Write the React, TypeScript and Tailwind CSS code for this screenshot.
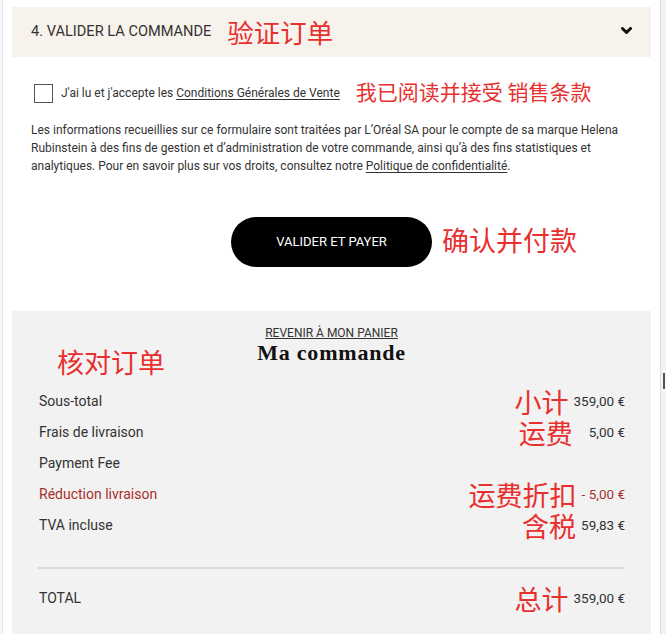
import React from "react";

const cn = "[font-family:'Noto_Sans_CJK_SC',sans-serif]";

function Note({ children, size = "text-[27px]", className = "" }: { children: React.ReactNode; size?: string; className?: string }) {
  return (
    <span className={`${cn} ${size} leading-none text-[#e8302f] whitespace-nowrap ${className}`}>
      {children}
    </span>
  );
}

function Row({
  label,
  value,
  note,
  gap = "gap-[5px]",
  red = false,
}: {
  label: string;
  value?: string;
  note?: string;
  gap?: string;
  red?: boolean;
}) {
  return (
    <div className={`flex h-[31px] items-center justify-between text-[14px] ${red ? "text-[#a7302e]" : "text-[#333]"}`}>
      <span>{label}</span>
      <div className={`flex items-center ${gap}`}>
        {note && <Note>{note}</Note>}
        {value && <span className="text-[13.5px]">{value}</span>}
      </div>
    </div>
  );
}

export default function App() {
  return (
    <div className="flex h-[634px] w-[666px] overflow-hidden bg-white [font-family:Roboto,'Liberation_Sans',sans-serif]">
      <div className="w-[3px] shrink-0 border-r border-[#e6e6e6] bg-[#f6f6f8]" />
      <div className="flex min-w-0 flex-1 flex-col px-[9px] pt-[7px]">
        {/* Header */}
        <div className="flex h-[50px] shrink-0 items-center justify-between bg-[#f7f2ec] pl-[19px] pr-[19px]">
          <div className="flex items-center gap-[16px]">
            <span className="text-[14.6px] text-[#333]">4. VALIDER LA COMMANDE</span>
            <Note size="text-[26.5px]">验证订单</Note>
          </div>
          <svg width="11" height="8" viewBox="0 0 11 8" className="mb-[3px]">
            <path d="M1.5 1.5 L5.5 5.5 L9.5 1.5" fill="none" stroke="#111" strokeWidth="3" strokeLinejoin="round" strokeLinecap="round" />
          </svg>
        </div>

        {/* Terms */}
        <div className="px-[19px]">
          <div className="mt-[24px] flex items-center whitespace-nowrap">
            <span className="ml-[3px] h-[19px] w-[19px] shrink-0 border border-[#555] bg-white" />
            <span className="ml-[8px] text-[12px] text-[#333]">
              J'ai lu et j'accepte les <span className="underline underline-offset-2">Conditions Générales de Vente</span>
            </span>
            <Note size="text-[21px]" className="mb-[3px] ml-[16px]">我已阅读并接受 销售条款</Note>
          </div>
          <p className="mt-[16px] text-[12px] leading-[18px] text-[#333]">
            Les informations recueillies sur ce formulaire sont traitées par L’Oréal SA pour le compte de sa marque Helena
            Rubinstein à des fins de gestion et d’administration de votre commande, ainsi qu’à des fins statistiques et
            analytiques. Pour en savoir plus sur vos droits, consultez notre{" "}
            <span className="underline underline-offset-2">Politique de confidentialité</span>.
          </p>
        </div>

        {/* Button */}
        <div className="mt-[42px] grid grid-cols-[1fr_auto_1fr] items-center">
          <div />
          <button className="flex h-[50px] w-[201px] items-center justify-center rounded-full bg-black text-[13px] text-white">
            VALIDER ET PAYER
          </button>
          <div className="pl-[10px]">
            <Note>确认并付款</Note>
          </div>
        </div>

        {/* Summary */}
        <div className="mt-[44px] flex-1 bg-[#f2f2f2] px-[26px] pt-[15px]">
          <div className="text-center text-[12px] leading-[14px] text-[#333]">
            <span className="underline underline-offset-1">REVENIR À MON PANIER</span>
          </div>
          <div className="grid grid-cols-[1fr_auto_1fr] items-start">
            <div className="pl-[19px] pt-[8px]">
              <Note>核对订单</Note>
            </div>
            <h2 className="text-center text-[22px] font-bold leading-[26px] tracking-[0.8px] text-[#111] [font-family:'Liberation_Serif',serif]">
              Ma commande
            </h2>
            <div />
          </div>
          <div className="mt-[6px] pl-[1px]">
            <Row label="Sous-total" value="359,00 €" note="小计" />
            <Row label="Frais de livraison" value="5,00 €" note="运费" gap="gap-[16px]" />
            <Row label="Payment Fee" />
            <Row label="Réduction livraison" value="- 5,00 €" note="运费折扣" red />
            <Row label="TVA incluse" value="59,83 €" note="含税" />
          </div>
          <div className="mt-[26px] h-[2px] bg-[#dadada]" />
          <div className="mt-[14px] pl-[1px]">
            <Row label="TOTAL" value="359,00 €" note="总计" />
          </div>
        </div>
      </div>
      <div className="relative w-[6px] shrink-0 border-l border-[#dcdcdc] bg-[#f3f3f3]">
        <div className="absolute left-[2px] top-[373px] h-[16px] w-[2px] bg-[#555]" />
      </div>
    </div>
  );
}
